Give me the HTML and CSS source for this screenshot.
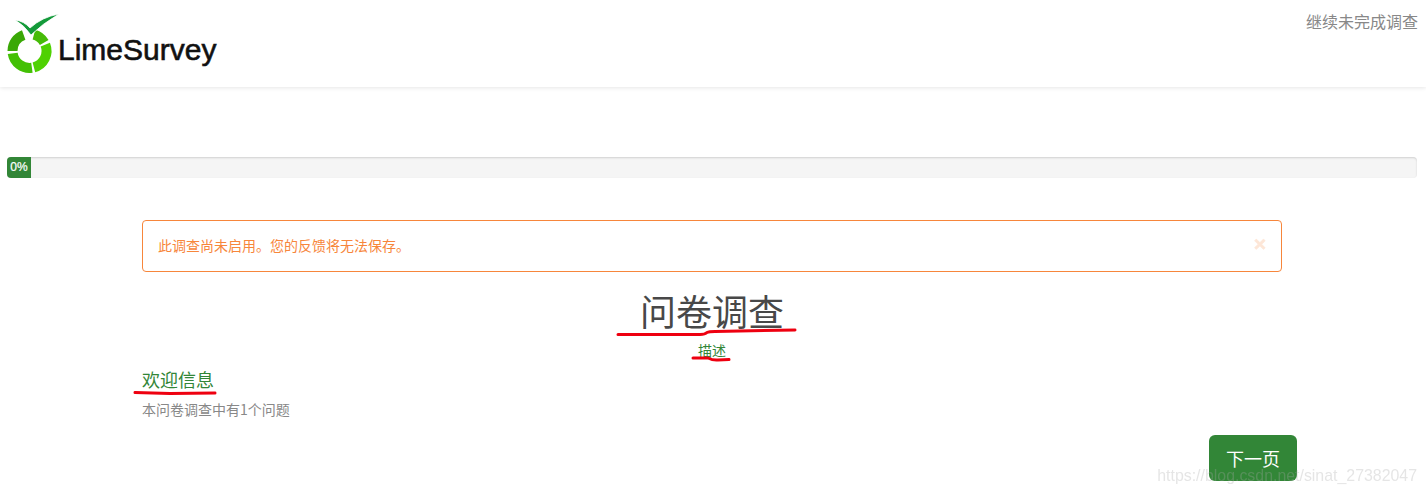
FILE: index.html
```html
<!DOCTYPE html>
<html lang="zh">
<head>
    <meta charset="UTF-8">
    <title>问卷调查</title>
    <link rel="stylesheet" href="styles.css">
</head>
<body>

<header class="topbar">
    <a class="brand" href="#">
        <svg class="brand-mark" width="60" height="76" viewBox="0 0 60 76" aria-hidden="true">
            <g fill="none" stroke-width="10">
                <path d="M33.9 34.6A17 17 0 0 1 44.2 42.5" stroke="#46bb08"/>
                <path d="M45.3 44.6A17 17 0 0 1 33.9 67.4" stroke="#4fd102"/>
                <path d="M31.9 67.8A17 17 0 0 1 12.7 53.4" stroke="#43c005"/>
                <path d="M12.5 51A17 17 0 0 1 23.7 35" stroke="#3aa806"/>
            </g>
            <path d="M15 20Q24 21 30 28Q42 17 59 14Q42 24 31 35Q24 25 15 20Z" fill="#149a3a" stroke="white" stroke-width="0.8"/>
        </svg>
        <span class="brand-name">LimeSurvey</span>
    </a>
    <a class="resume-link" href="#">继续未完成调查</a>
</header>

<div class="progress">
    <div class="progress-bar">0%</div>
</div>

<div class="container">
    <div class="alert">
        <span class="alert-text">此调查尚未启用。您的反馈将无法保存。</span>
        <span class="alert-close">×</span>
    </div>

    <h1 class="survey-title">问卷调查</h1>
    <div class="survey-desc">描述</div>

    <h2 class="welcome-title">欢迎信息</h2>
    <p class="question-count">本问卷调查中有1个问题</p>

    <div class="actions">
        <button class="btn-next" type="button">下一页</button>
    </div>
</div>

<!-- 截图上的红色标注线 -->
<svg class="marks" width="1426" height="495" viewBox="0 0 1426 495" aria-hidden="true">
    <g fill="none" stroke="#ee0010" stroke-width="3" stroke-linecap="round">
        <path d="M618 334.5L700 334.5Q705 334.5 707 332.5Q709 331.5 715 331.5L795 330"/>
        <path d="M693 358L708 358Q713 360.5 718 360L729 359.5"/>
        <path d="M135 392.5L170 393.5L215 393"/>
    </g>
</svg>

<div class="watermark">https://blog.csdn.net/sinat_27382047</div>

</body>
</html>
```

FILE: styles.css
```css
html, body {
    height: 495px;
    overflow: hidden;
}
body {
    font-family: "Noto Sans CJK SC", "Liberation Sans", sans-serif;
    font-size: 14px;
    margin: 0;
    padding: 0;
    background-color: white;
    color: #888;
    position: relative;
}
a {
    text-decoration: none;
}
.topbar {
    height: 87px;
    display: flex;
    justify-content: space-between;
    box-shadow: 0 1px 4px rgba(0, 0, 0, 0.1);
}
.brand {
    display: flex;
    align-items: flex-start;
}
.brand-mark {
    display: block;
    flex: none;
}
.brand-name {
    font-family: "Liberation Sans", sans-serif;
    font-size: 30px;
    line-height: 36px;
    color: #111;
    -webkit-text-stroke: 0.6px #111;
    margin: 32px 0 0 -2px;
}
.resume-link {
    font-size: 16px;
    line-height: 24px;
    color: #888;
    margin: 9px 8px 0 0;
}
.progress {
    height: 21px;
    margin: 70px 9px 0 7px;
    background-color: #f5f5f5;
    border-radius: 4px;
    box-shadow: inset 0 1px 2px rgba(0, 0, 0, 0.15);
    overflow: hidden;
}
.progress-bar {
    width: 24px;
    height: 21px;
    line-height: 20px;
    background-color: #328637;
    color: white;
    font-family: "Liberation Sans", sans-serif;
    font-size: 12px;
    -webkit-text-stroke: 0.2px white;
    text-align: center;
}
.container {
    width: 1140px;
    margin: 42px 0 0 142px;
}
.alert {
    height: 50px;
    padding: 0 15px;
    border: 1px solid #f7863b;
    border-radius: 4px;
    color: #f7863b;
    display: flex;
    align-items: center;
    justify-content: space-between;
}
.alert-text {
    margin-top: -2px;
}
.alert-close {
    font-family: "Liberation Sans", sans-serif;
    font-weight: bold;
    font-size: 21px;
    line-height: 21px;
    -webkit-text-stroke: 0.6px #f7863b;
    opacity: 0.2;
    margin: -6px 0 0 0;
}
.survey-title {
    font-size: 36px;
    font-weight: normal;
    line-height: 40px;
    color: #484848;
    text-align: center;
    margin: 18px 0 0 0;
}
.survey-desc {
    color: #328637;
    text-align: center;
    line-height: 20px;
    margin-top: 10px;
}
.welcome-title {
    font-size: 18px;
    font-weight: normal;
    line-height: 20px;
    color: #328637;
    margin: 9px 0 0 0;
}
.question-count {
    line-height: 20px;
    margin: 10px 0 0 0;
}
.actions {
    display: flex;
    justify-content: flex-end;
    margin: 16px -15px 0 0;
}
.btn-next {
    width: 88px;
    height: 46px;
    border: none;
    border-radius: 6px;
    background-color: #328637;
    color: white;
    font-family: inherit;
    font-size: 18px;
}
.marks {
    position: absolute;
    top: 0;
    left: 0;
}
.watermark {
    position: absolute;
    top: 466px;
    right: 9px;
    font-family: "Liberation Sans", sans-serif;
    font-size: 15.9px;
    line-height: 20px;
    color: rgba(170, 170, 170, 0.3);
    filter: blur(0.4px);
}
```
